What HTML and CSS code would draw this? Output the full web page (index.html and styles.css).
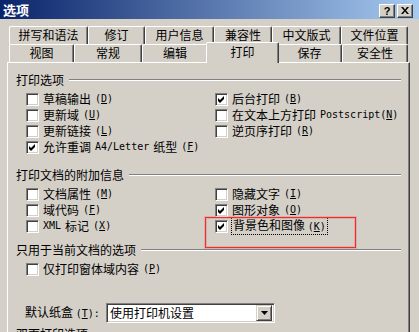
FILE: index.html
```html
<!DOCTYPE html>
<html lang="zh-CN">
<head>
    <title>选项</title>
    <meta charset="utf-8">
    <link rel="stylesheet" href="styles.css">
</head>
<body>
<div class="dialog">
    <div class="titlebar">
        <span class="title">选项</span>
        <div class="cbtns">
            <span class="cbtn">?</span>
            <span class="cbtn">
                <svg width="8" height="7" viewBox="0 0 8 7"><path d="M0 0h2l2 2.5 2-2.5h2L5 3.5 8 7H6L4 4.5 2 7H0l3-3.5z" fill="#000"/></svg>
            </span>
        </div>
    </div>

    <div class="tabs">
        <div class="tab-row">
            <div class="tab w79">拼写和语法</div>
            <div class="tab w57">修订</div>
            <div class="tab w69">用户信息</div>
            <div class="tab w58">兼容性</div>
            <div class="tab w69">中文版式</div>
            <div class="tab w67">文件位置</div>
        </div>
        <div class="tab-row">
            <div class="tab w65">视图</div>
            <div class="tab w68">常规</div>
            <div class="tab w66">编辑</div>
            <div class="tab active">打印</div>
            <div class="tab w65">保存</div>
            <div class="tab w66">安全性</div>
        </div>
    </div>

    <div class="panel">
        <div class="group-label first"><span>打印选项</span><span class="rule"></span></div>
        <div class="checks">
            <div class="check"><span class="box"></span>草稿输出 <span class="en">(<u>D</u>)</span></div>
            <div class="check"><span class="box"><svg width="7" height="7" viewBox="0 0 7 7"><path d="M0 2l2 2 4-4v3l-4 4-2-2z" fill="#000"/></svg></span>后台打印<span class="en">(<u>B</u>)</span></div>
            <div class="check"><span class="box"></span>更新域 <span class="en">(<u>U</u>)</span></div>
            <div class="check"><span class="box"></span>在文本上方打印 <span class="en">Postscript(<u>N</u>)</span></div>
            <div class="check"><span class="box"></span>更新链接 <span class="en">(<u>L</u>)</span></div>
            <div class="check"><span class="box"></span>逆页序打印<span class="en">(<u>R</u>)</span></div>
            <div class="check"><span class="box"><svg width="7" height="7" viewBox="0 0 7 7"><path d="M0 2l2 2 4-4v3l-4 4-2-2z" fill="#000"/></svg></span>允许重调 <span class="en">A4/Letter </span>纸型 <span class="en">(<u>F</u>)</span></div>
        </div>

        <div class="group-label second"><span>打印文档的附加信息</span><span class="rule"></span></div>
        <div class="checks">
            <div class="check"><span class="box"></span>文档属性 <span class="en">(<u>M</u>)</span></div>
            <div class="check"><span class="box"></span>隐藏文字 <span class="en">(<u>I</u>)</span></div>
            <div class="check"><span class="box"></span>域代码 <span class="en">(<u>F</u>)</span></div>
            <div class="check"><span class="box"><svg width="7" height="7" viewBox="0 0 7 7"><path d="M0 2l2 2 4-4v3l-4 4-2-2z" fill="#000"/></svg></span>图形对象 <span class="en">(<u>O</u>)</span></div>
            <div class="check"><span class="box"></span><span class="en">XML </span>标记 <span class="en">(<u>X</u>)</span></div>
            <div class="check marked"><span class="box"><svg width="7" height="7" viewBox="0 0 7 7"><path d="M0 2l2 2 4-4v3l-4 4-2-2z" fill="#000"/></svg></span><span class="focus">背景色和图像 <span class="en">(<u>K</u>)</span></span><span class="redbox"></span></div>
        </div>

        <div class="group-label third"><span>只用于当前文档的选项</span><span class="rule"></span></div>
        <div class="checks">
            <div class="check"><span class="box"></span>仅打印窗体域内容 <span class="en">(<u>P</u>)</span></div>
        </div>

        <div class="tray">
            <span class="tray-label">默认纸盒 <span class="en">(<u>T</u>):</span></span>
            <div class="select">
                <span class="select-text">使用打印机设置</span>
                <span class="drop"><svg width="7" height="4" viewBox="0 0 7 4"><path d="M0 0h7L3.5 4z" fill="#000"/></svg></span>
            </div>
        </div>

        <div class="group-label fourth"><span>双面打印选项</span><span class="rule"></span></div>
    </div>
</div>
</body>
</html>
```

FILE: styles.css
```css
html, body {
    margin: 0;
    padding: 0;
    background: #d4d0c8;
}
.dialog {
    width: 419px;
    height: 332px;
    overflow: hidden;
    background: #d4d0c8;
    font-family: "Noto Sans CJK SC", sans-serif;
    font-size: 12px;
    line-height: 14px;
    color: #000;
}
.en {
    font-family: "DejaVu Sans Mono", "Liberation Mono", monospace;
    font-size: 10px;
}

/* title bar */
.titlebar {
    height: 19px;
    display: flex;
    align-items: center;
    justify-content: space-between;
    padding: 0 6px 0 3px;
    background: linear-gradient(to right, #0a246a, #a6caf0);
}
.title {
    color: #fff;
    font-weight: bold;
    font-size: 13px;
}
.cbtns {
    display: flex;
    gap: 2px;
    margin-top: 2px;
}
.cbtn {
    width: 16px;
    height: 14px;
    box-sizing: border-box;
    background: #d4d0c8;
    border: 1px solid;
    border-color: #fff #404040 #404040 #fff;
    box-shadow: inset -1px -1px #808080;
    display: flex;
    align-items: center;
    justify-content: center;
    font: bold 11px "Liberation Sans", sans-serif;
}

/* tabs */
.tabs {
    padding: 7px 0 0 9px;
}
.tab-row {
    display: flex;
}
.tab {
    box-sizing: border-box;
    height: 18px;
    border-top: 1px solid #fff;
    border-left: 1px solid #fff;
    border-right: 1px solid #404040;
    box-shadow: inset -1px 0 #808080;
    border-radius: 2px 2px 0 0;
    text-align: center;
    line-height: 16px;
    background: #d4d0c8;
}
.w57 { width: 57px; }
.w58 { width: 58px; }
.w65 { width: 65px; }
.w66 { width: 66px; }
.w67 { width: 67px; }
.w68 { width: 68px; }
.w69 { width: 69px; }
.w79 { width: 79px; }
.tab.active {
    width: 73px;
    height: 21px;
    margin: -2px -2px -1px;
    line-height: 18px;
    position: relative;
    z-index: 1;
}

/* panel */
.panel {
    margin-left: 7px;
    width: 403px;
    height: 300px;
    box-sizing: border-box;
    border-top: 1px solid #fff;
    border-left: 1px solid #fff;
    border-right: 1px solid #404040;
    box-shadow: inset -1px 0 #808080;
    padding: 0 8px;
}
.group-label {
    display: flex;
    align-items: center;
    height: 14px;
}
.group-label.first { margin-top: 10px; }
.group-label.second { margin-top: 13px; }
.group-label.third { margin-top: 9px; }
.group-label.fourth { margin-top: 4px; }
.rule {
    flex: 1;
    margin-left: 5px;
    border-top: 1px solid #808080;
    border-bottom: 1px solid #fff;
}

.checks {
    display: grid;
    grid-template-columns: 189px 1fr;
    grid-auto-rows: 16px;
    margin: 4px 0 0 10px;
}
.check {
    display: flex;
    align-items: center;
    gap: 4px;
    white-space: nowrap;
}
.box {
    flex: none;
    width: 13px;
    height: 13px;
    box-sizing: border-box;
    background: #fff;
    border: 1px solid;
    border-color: #808080 #fff #fff #808080;
    box-shadow: inset 1px 1px #404040, inset -1px -1px #d4d0c8;
    display: flex;
    align-items: center;
    justify-content: center;
}
.marked {
    position: relative;
}
.focus {
    outline: 1px dotted #000;
    outline-offset: 0;
    padding: 0 1px;
}
.redbox {
    position: absolute;
    left: -10px;
    top: -1px;
    width: 151px;
    height: 31px;
    box-sizing: border-box;
    border: 1px solid #e8302f;
    box-shadow: 0 0 0 1px rgba(240, 110, 110, 0.35), inset 0 0 0 1px rgba(240, 110, 110, 0.35);
}

/* paper tray */
.tray {
    display: flex;
    align-items: center;
    height: 20px;
    margin: 26px 0 0 9px;
}
.tray-label {
    width: 81px;
    flex: none;
}
.select {
    width: 169px;
    height: 20px;
    box-sizing: border-box;
    background: #fff;
    border: 1px solid;
    border-color: #808080 #fff #fff #808080;
    box-shadow: inset 1px 1px #404040, inset -1px -1px #d4d0c8;
    display: flex;
    align-items: center;
    justify-content: space-between;
    padding: 0 2px 0 3px;
}
.drop {
    width: 16px;
    height: 16px;
    box-sizing: border-box;
    background: #d4d0c8;
    border: 1px solid;
    border-color: #d4d0c8 #404040 #404040 #d4d0c8;
    box-shadow: inset 1px 1px #fff, inset -1px -1px #808080;
    display: flex;
    align-items: center;
    justify-content: center;
}
```
